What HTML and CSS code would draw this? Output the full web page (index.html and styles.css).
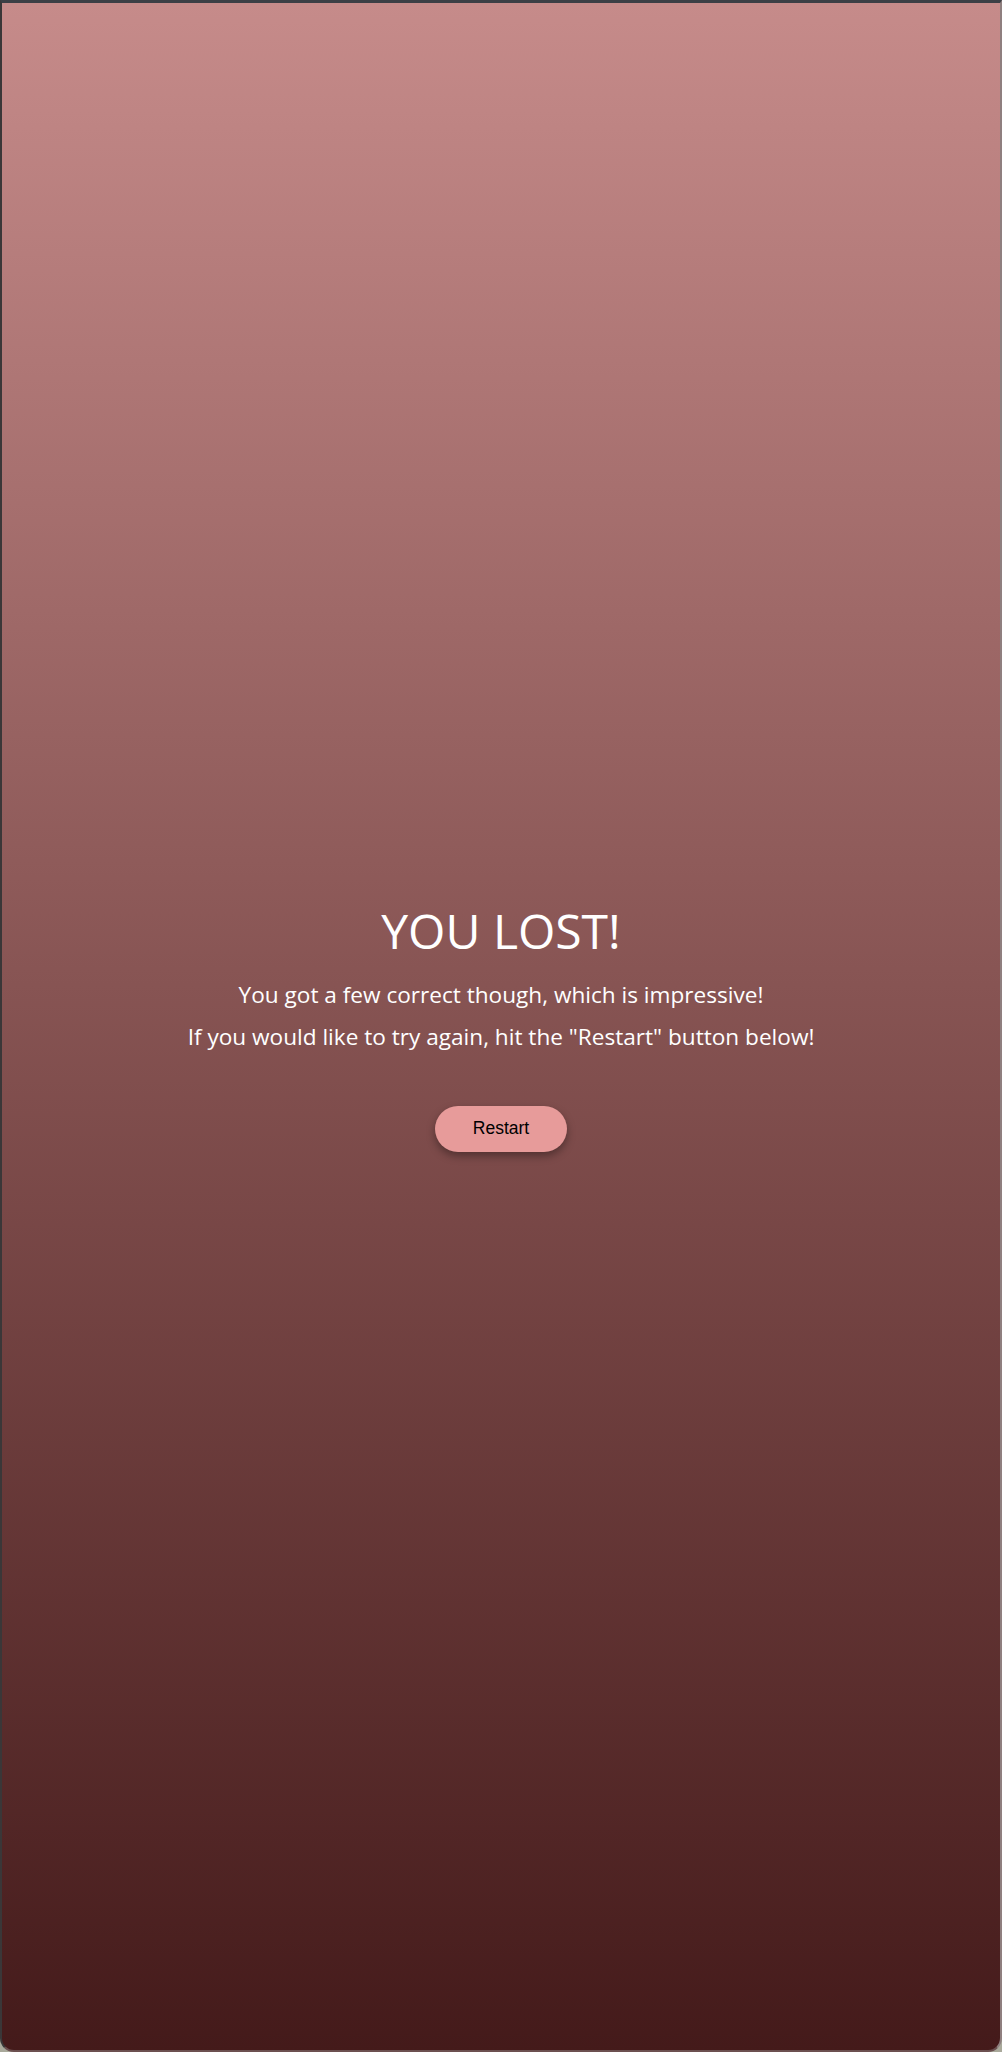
FILE: index.html
```html
<!DOCTYPE html>
<html lang="en">
<head>
<meta charset="utf-8">
<title>You Lost</title>
<link rel="stylesheet" href="styles.css">
</head>
<body>
<div class="frame">
  <main class="result">
    <h1 class="result-title">YOU LOST!</h1>
    <p class="result-text">You got a few correct though, which is impressive!</p>
    <p class="result-text">If you would like to try again, hit the "Restart" button below!</p>
    <button class="restart-btn" type="button">Restart</button>
  </main>
</div>
</body>
</html>
```

FILE: styles.css
```css
html, body {
  margin: 0;
  padding: 0;
}

body {
  background: #a9a99b;
  width: 1002px;
  height: 2052px;
  overflow: hidden;
}

.frame {
  box-sizing: border-box;
  height: 2052px;
  border-top: 3px solid #3c3f45;
  border-left: 2px solid #3a3738;
  border-right: 2px solid #8f7f7f;
  border-bottom: 2px solid #6c5050;
  border-radius: 0 0 14px 14px;
  background: linear-gradient(180deg, #c68b8a 0%, #875453 48%, #441a1a 100%);
  display: flex;
  align-items: center;
  justify-content: center;
}

.result {
  display: flex;
  flex-direction: column;
  align-items: center;
  color: #ffffff;
  font-family: "Open Sans", "DejaVu Sans", sans-serif;
  text-align: center;
}

.result-title {
  margin: 0 0 14px;
  font-size: 48px;
  font-weight: 400;
  line-height: 58px;
}

.result-text {
  margin: 0;
  font-size: 22.6px;
  line-height: 42px;
}

.restart-btn {
  margin-top: 48px;
  width: 132px;
  height: 46px;
  border: none;
  border-radius: 23px;
  background: #e79b9a;
  color: #000000;
  font-family: "Liberation Sans", Arial, sans-serif;
  font-size: 17.5px;
  box-shadow: 0 4px 8px rgba(0, 0, 0, 0.35);
}
```
